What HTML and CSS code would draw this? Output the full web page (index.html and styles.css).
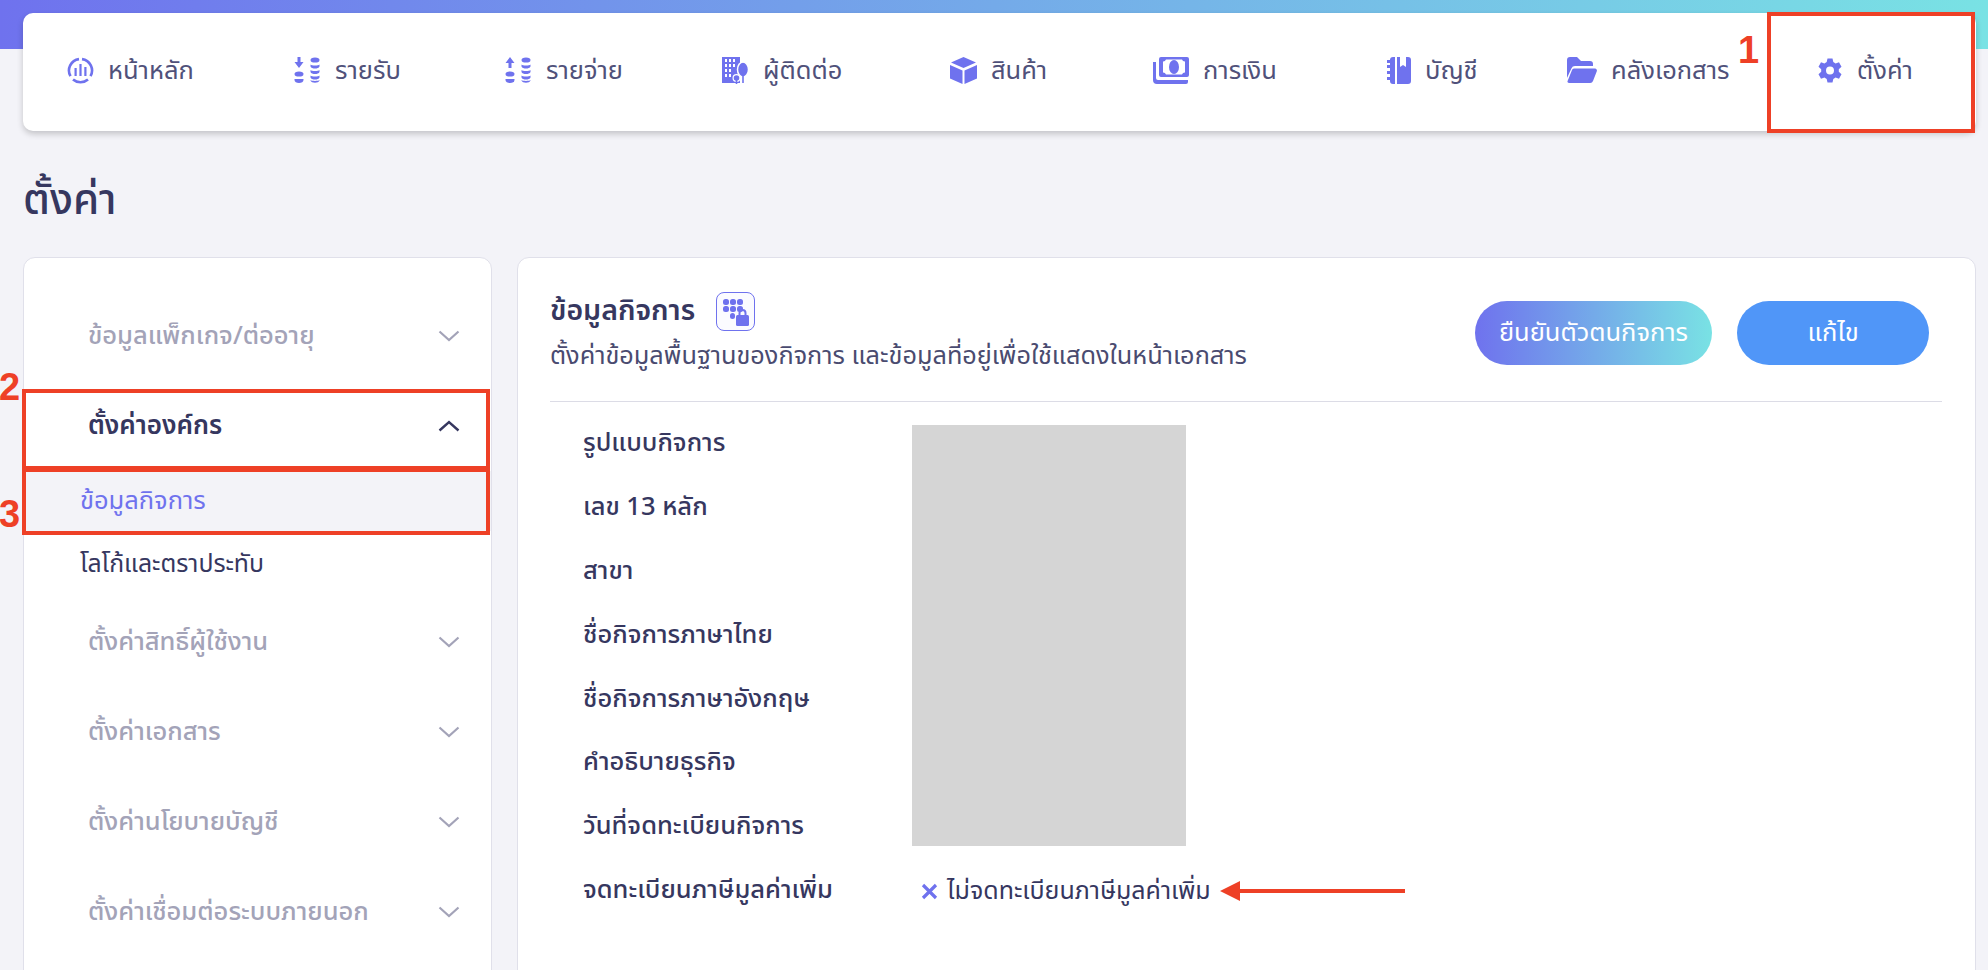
FILE: index.html
```html
<!DOCTYPE html>
<html lang="th">
<head>
    <meta charset="UTF-8">
    <title>ตั้งค่า</title>
    <link rel="stylesheet" href="styles.css">
</head>
<body>
    <div class="top-band"></div>

    <nav class="topnav">
        <a class="nav-item">
            <svg class="nav-icon" width="27" height="27" viewBox="0 0 27 27"><path d="M12 2.100A11.500 11.500 0 0 0 3.500 19.200M15 2.100A11.500 11.500 0 0 1 23.500 19.200M6 22.400a11.500 11.500 0 0 0 15 0" fill="none" stroke="#6f72ee" stroke-width="2.600"/><path d="M7.500 11h2.200v8H7.500zM12.400 7h2.200v12h-2.200zM17.300 10h2.200v9h-2.200z" fill="#6f72ee"/></svg>
            <span>หน้าหลัก</span>
        </a>
        <a class="nav-item">
            <svg class="nav-icon" width="27" height="27" viewBox="0 0 27 27"><path d="M3.500 0h3v5h3l-4.500 6-4.500-6h3z" fill="#6f72ee"/><ellipse cx="5" cy="17" rx="4.500" ry="2.600" fill="#6f72ee"/><path d="M.5 22h9v1c0 2-2 3-4.500 3S.5 25 .5 23z" fill="#6f72ee"/><ellipse cx="21" cy="3" rx="4.500" ry="2.600" fill="#6f72ee"/><path d="M16.500 7.500c1 1.400 8 1.400 9 0v2c-1 2.800-8 2.800-9 0zM16.500 13c1 1.400 8 1.400 9 0v2c-1 2.800-8 2.800-9 0zM16.500 18.500c1 1.400 8 1.400 9 0v2c-1 2.800-8 2.800-9 0zM16.500 23c1 1.200 8 1.200 9 0v.6c-1 3-8 3-9 0z" fill="#6f72ee"/></svg>
            <span>รายรับ</span>
        </a>
        <a class="nav-item">
            <svg class="nav-icon" width="27" height="27" viewBox="0 0 27 27"><path d="M3.500 11h3V6h3L5 0 .5 6h3z" fill="#6f72ee"/><ellipse cx="5" cy="17" rx="4.500" ry="2.600" fill="#6f72ee"/><path d="M.5 22h9v1c0 2-2 3-4.500 3S.5 25 .5 23z" fill="#6f72ee"/><ellipse cx="21" cy="3" rx="4.500" ry="2.600" fill="#6f72ee"/><path d="M16.500 7.500c1 1.400 8 1.400 9 0v2c-1 2.800-8 2.800-9 0zM16.500 13c1 1.400 8 1.400 9 0v2c-1 2.800-8 2.800-9 0zM16.500 18.500c1 1.400 8 1.400 9 0v2c-1 2.800-8 2.800-9 0zM16.500 23c1 1.200 8 1.200 9 0v.6c-1 3-8 3-9 0z" fill="#6f72ee"/></svg>
            <span>รายจ่าย</span>
        </a>
        <a class="nav-item">
            <svg class="nav-icon" width="27" height="27" viewBox="0 0 27 27"><path fill-rule="evenodd" d="M0 0h18v26H0zM3 2v3h2V2zm4 0v3h2V2zm4 0v3h2V2zM3 7v3h2V7zm4 0v3h2V7zm4 0v3h2V7zM3 12v3h2v-3zm4 0v3h2v-3zM3 17v3h2v-3zm4 0v3h2v-3z" fill="#6f72ee"/><ellipse cx="21" cy="12.500" rx="5.500" ry="7.500" fill="#6f72ee" stroke="#fff" stroke-width="1.500"/><circle cx="14.500" cy="21" r="3.400" fill="#6f72ee" stroke="#fff" stroke-width="1.200"/><path d="M13.700 23h1.600v4h-1.600zM20.200 18h1.600v8h-1.600z" fill="#6f72ee"/></svg>
            <span>ผู้ติดต่อ</span>
        </a>
        <a class="nav-item">
            <svg class="nav-icon" width="27" height="27" viewBox="0 0 27 27"><path d="M13.500 0L26 5.500 13.500 11 1 5.500zM0 8l12.500 5.500V27L0 21.500zM27 8l-12.500 5.500V27L27 21.500z" fill="#6f72ee"/></svg>
            <span>สินค้า</span>
        </a>
        <a class="nav-item">
            <svg class="nav-icon" width="36" height="27" viewBox="0 0 36 27"><path fill-rule="evenodd" d="M6 2a2 2 0 0 1 2-2h26a2 2 0 0 1 2 2v16a2 2 0 0 1-2 2H8a2 2 0 0 1-2-2zm4 2.500v11a3 3 0 0 1 3 2h16a3 3 0 0 1 3-2v-11a3 3 0 0 1-3-2H13a3 3 0 0 1-3 2z" fill="#6f72ee"/><ellipse cx="21" cy="10" rx="5" ry="7" fill="#6f72ee"/><path d="M0 5h3v16a2 2 0 0 0 2 2h30v2a2 2 0 0 1-2 2H4a4 4 0 0 1-4-4z" fill="#6f72ee"/></svg>
            <span>การเงิน</span>
        </a>
        <a class="nav-item">
            <svg class="nav-icon" width="24" height="27" viewBox="0 0 24 27"><path d="M3 3a3 3 0 0 1 3-3h2v27H6a3 3 0 0 1-3-3v-1H0v-3h3v-3H0v-3h3v-3H0V8h3V6H0V3z" fill="#6f72ee"/><path fill-rule="evenodd" d="M10 0h11a3 3 0 0 1 3 3v21a3 3 0 0 1-3 3H10zm3 0v10l3-2 3 2V0z" fill="#6f72ee"/></svg>
            <span>บัญชี</span>
        </a>
        <a class="nav-item">
            <svg class="nav-icon" width="30" height="27" viewBox="0 0 30 27"><path d="M0 3a3 3 0 0 1 3-3h7l4 4h9a3 3 0 0 1 3 3v2H8a4 4 0 0 0-3.600 2.400L0 21z" fill="#6f72ee"/><path d="M7 11.500h21a2 2 0 0 1 1.800 2.700L26 24a3 3 0 0 1-3 2H2a1.500 1.500 0 0 1-1.400-2l4.400-11a2 2 0 0 1 2-1.500z" fill="#6f72ee"/></svg>
            <span>คลังเอกสาร</span>
        </a>
        <a class="nav-item">
            <svg class="nav-icon" width="26" height="27" viewBox="0 0 26 27"><path fill-rule="evenodd" d="M10.500 0h5l.8 3.600 2.300 1.300L22 3.800l2.500 4.400-2.700 2.500v2.600l2.700 2.500-2.500 4.400-3.400-1.100-2.300 1.300-.8 3.600h-5l-.8-3.600-2.300-1.300L4 20.200l-2.500-4.400 2.700-2.500v-2.600L1.500 8.200 4 3.800l3.400 1.100 2.300-1.300zM13 8a4 4 0 1 0 0 8 4 4 0 0 0 0-8z" fill="#6f72ee" transform="translate(0 1.500)"/></svg>
            <span>ตั้งค่า</span>
        </a>
    </nav>

    <h1 class="page-title">ตั้งค่า</h1>

    <div class="layout">
        <aside class="side card">
            <div class="side-group">
                <span>ข้อมูลแพ็กเกจ/ต่ออายุ</span>
                <svg class="chevron" width="22" height="12" viewBox="0 0 22 12"><path d="M1.500 1.500L11 10l9.500-8.500" fill="none" stroke="#a3a3b8" stroke-width="2.200"/></svg>
            </div>
            <div class="side-group side-open">
                <span>ตั้งค่าองค์กร</span>
                <svg class="chevron" width="22" height="12" viewBox="0 0 22 12"><path d="M1.500 10.500L11 2l9.500 8.500" fill="none" stroke="#36375f" stroke-width="2.400"/></svg>
            </div>
            <div class="side-sub side-sub-active">ข้อมูลกิจการ</div>
            <div class="side-sub">โลโก้และตราประทับ</div>
            <div class="side-group">
                <span>ตั้งค่าสิทธิ์ผู้ใช้งาน</span>
                <svg class="chevron" width="22" height="12" viewBox="0 0 22 12"><path d="M1.500 1.500L11 10l9.500-8.500" fill="none" stroke="#a3a3b8" stroke-width="2.200"/></svg>
            </div>
            <div class="side-group">
                <span>ตั้งค่าเอกสาร</span>
                <svg class="chevron" width="22" height="12" viewBox="0 0 22 12"><path d="M1.500 1.500L11 10l9.500-8.500" fill="none" stroke="#a3a3b8" stroke-width="2.200"/></svg>
            </div>
            <div class="side-group">
                <span>ตั้งค่านโยบายบัญชี</span>
                <svg class="chevron" width="22" height="12" viewBox="0 0 22 12"><path d="M1.500 1.500L11 10l9.500-8.500" fill="none" stroke="#a3a3b8" stroke-width="2.200"/></svg>
            </div>
            <div class="side-group">
                <span>ตั้งค่าเชื่อมต่อระบบภายนอก</span>
                <svg class="chevron" width="22" height="12" viewBox="0 0 22 12"><path d="M1.500 1.500L11 10l9.500-8.500" fill="none" stroke="#a3a3b8" stroke-width="2.200"/></svg>
            </div>
        </aside>

        <main class="content card">
            <div class="content-head">
                <div>
                    <div class="content-title">
                        <h2>ข้อมูลกิจการ</h2>
                        <span class="title-badge">
                            <svg width="30" height="30" viewBox="0 0 30 30"><g fill="#6f72ee"><rect x="2" y="2" width="6" height="6" rx="2.500"/><rect x="9" y="2" width="6" height="6" rx="2.500"/><rect x="16" y="2" width="6" height="6" rx="2.500"/><rect x="2" y="9" width="6" height="6" rx="2.500"/><rect x="9" y="9" width="6" height="6" rx="2.500"/><rect x="16" y="9" width="6" height="6" rx="2.500"/><rect x="9" y="16" width="5" height="6" rx="2.500"/><rect x="15" y="18" width="13" height="11" rx="1.500"/><path d="M17.500 19v-3a4 4 0 0 1 8 0v3h-2v-3a2 2 0 0 0-4 0v3z"/></g></svg>
                        </span>
                    </div>
                    <p class="content-desc">ตั้งค่าข้อมูลพื้นฐานของกิจการ และข้อมูลที่อยู่เพื่อใช้แสดงในหน้าเอกสาร</p>
                </div>
                <div class="head-actions">
                    <button class="btn btn-verify">ยืนยันตัวตนกิจการ</button>
                    <button class="btn btn-edit">แก้ไข</button>
                </div>
            </div>

            <div class="info">
                <div class="info-labels">
                    <div>รูปแบบกิจการ</div>
                    <div>เลข 13 หลัก</div>
                    <div>สาขา</div>
                    <div>ชื่อกิจการภาษาไทย</div>
                    <div>ชื่อกิจการภาษาอังกฤษ</div>
                    <div>คำอธิบายธุรกิจ</div>
                    <div>วันที่จดทะเบียนกิจการ</div>
                    <div>จดทะเบียนภาษีมูลค่าเพิ่ม</div>
                </div>
                <div class="info-values">
                    <div class="redacted"></div>
                    <div class="vat-row">
                        <svg width="17" height="17" viewBox="0 0 17 17"><path d="M2 2l13 13M15 2L2 15" stroke="#6f72ee" stroke-width="3.200" fill="none"/></svg>
                        <span>ไม่จดทะเบียนภาษีมูลค่าเพิ่ม</span>
                        <svg class="vat-arrow" width="185" height="20" viewBox="0 0 185 20"><path d="M0 10L20 0v8h165v4H20v8z" fill="#ee4026"/></svg>
                    </div>
                </div>
            </div>
        </main>
    </div>

    <div class="mark-box mark-box-1"></div>
    <div class="mark-box mark-box-2"></div>
    <div class="mark-box mark-box-3"></div>
    <span class="mark-num mark-num-1">1</span>
    <span class="mark-num mark-num-2">2</span>
    <span class="mark-num mark-num-3">3</span>
</body>
</html>
```

FILE: styles.css
```css
* {
    box-sizing: border-box;
}

html, body {
    height: 970px;
    overflow: hidden;
}

body {
    margin: 0;
    position: relative;
    padding: 13px 12px 0 23px;
    background: #f3f3f8;
    color: #36375f;
    font-family: "Noto Sans Thai", "Noto Sans", "Inter", sans-serif;
    font-size: 25.500px;
}

.top-band {
    position: absolute;
    top: 0;
    left: 0;
    right: 0;
    height: 49px;
    background: linear-gradient(90deg, #6f72ee, #79e2e4);
}

.topnav {
    position: relative;
    height: 118px;
    display: grid;
    grid-template-columns: 227px 211px 217px 228px 203px 234px 180px 250px 1fr;
    padding: 0 0 3px 44px;
    background: #fff;
    border-radius: 10px;
    box-shadow: 0 3px 6px rgba(0, 0, 0, 0.2);
}

.nav-item {
    display: flex;
    align-items: center;
    gap: 14px;
    color: #50517a;
}

.nav-icon {
    flex: none;
    margin-top: -1px;
}

.page-title {
    margin: 43px 0 0;
    height: 55px;
    line-height: 55px;
    font-size: 42px;
    font-weight: 500;
}

.layout {
    display: flex;
    gap: 25px;
    margin-top: 28px;
}

.card {
    background: #fff;
    border: 1px solid #e0e0ea;
    border-radius: 12px;
    height: 800px;
}

.side {
    flex: none;
    width: 469px;
    padding-top: 33px;
}

.side-group {
    height: 90px;
    display: flex;
    align-items: center;
    justify-content: space-between;
    padding: 0 31px 0 64px;
    color: #a3a3b8;
    font-weight: 500;
}

.side-open {
    color: #36375f;
    font-size: 26px;
    font-weight: 600;
}

.side-sub {
    height: 60px;
    margin-bottom: 3px;
    display: flex;
    align-items: center;
    padding-left: 56px;
    color: #36375f;
    font-size: 24.800px;
}

.side-sub + .side-group {
    margin-top: 1px;
}

.side-sub-active {
    background: #f3f3f8;
    color: #6f72ee;
    font-size: 25.500px;
}

.content {
    flex: 1;
    padding: 32px 33px 0 32px;
}

.content-head {
    display: flex;
    justify-content: space-between;
    height: 112px;
    border-bottom: 1px solid #dcdce6;
    padding-right: 13px;
}

.content-title {
    display: flex;
    align-items: center;
    gap: 21px;
}

.content-title h2 {
    margin: 0;
    font-size: 28.500px;
    font-weight: 600;
}

.title-badge {
    width: 39px;
    height: 39px;
    display: flex;
    align-items: center;
    justify-content: center;
    border: 1.500px solid #6f72ee;
    border-radius: 8px;
    background: #fbfbff;
}

.content-desc {
    margin: 4px 0 0;
    font-size: 25.300px;
    color: #4a4b70;
}

.head-actions {
    display: flex;
    gap: 25px;
    padding-top: 11px;
}

.btn {
    height: 64px;
    border: none;
    border-radius: 32px;
    color: #fff;
    font-family: inherit;
    font-size: 25.500px;
}

.btn-verify {
    width: 237px;
    background: linear-gradient(90deg, #6f72ee, #79e2e4);
}

.btn-edit {
    width: 192px;
    background: #5096f8;
}

.info {
    display: flex;
    padding: 23px 0 0 33px;
}

.info-labels {
    width: 329px;
    font-weight: 500;
}

.info-labels div {
    height: 63.900px;
    line-height: 36px;
}

.info-values {
    flex: 1;
}

.redacted {
    width: 274px;
    height: 421px;
    background: #d5d5d5;
}

.vat-row {
    display: flex;
    align-items: center;
    gap: 9px;
    margin: 26px 0 0 9px;
    font-size: 25px;
    color: #36375f;
}

/* red marks drawn over the screenshot */
.mark-box {
    position: absolute;
    border: 4px solid #ee4026;
}

.mark-box-1 {
    left: 1767px;
    top: 12px;
    width: 208px;
    height: 121px;
}

.mark-box-2 {
    left: 22px;
    top: 389px;
    width: 468px;
    height: 81px;
}

.mark-box-3 {
    left: 22px;
    top: 468px;
    width: 468px;
    height: 67px;
}

.mark-num {
    position: absolute;
    color: #ee4026;
    font-family: "Liberation Sans", sans-serif;
    font-weight: 700;
    font-size: 38px;
    line-height: 38px;
}

.mark-num-1 {
    left: 1738px;
    top: 31px;
}

.mark-num-2 {
    left: -1px;
    top: 368px;
}

.mark-num-3 {
    left: -1px;
    top: 495px;
}
```
